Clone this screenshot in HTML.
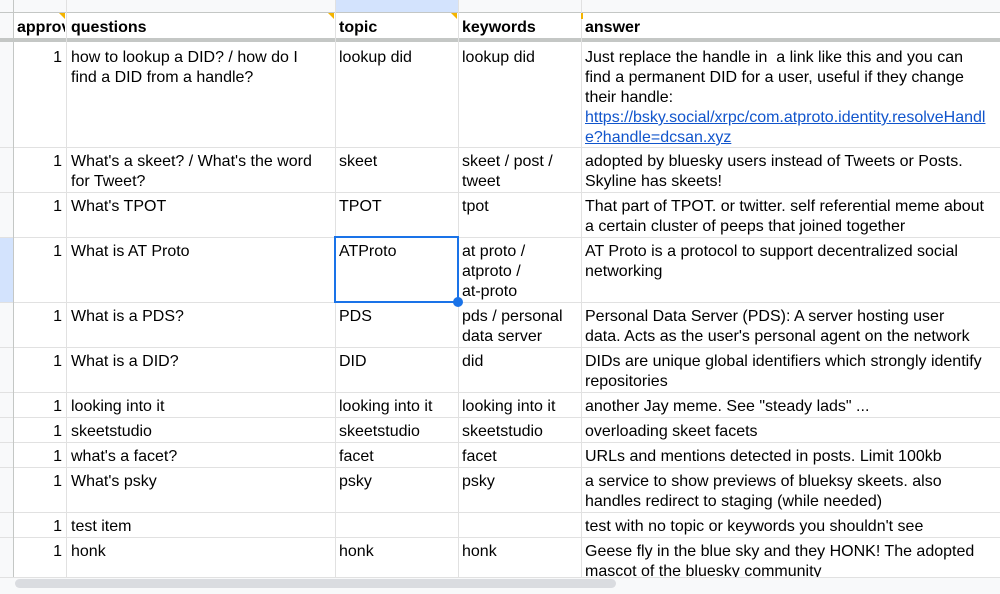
<!DOCTYPE html>
<html><head><meta charset="utf-8"><style>
body{margin:0;width:1000px;height:593px;overflow:hidden;background:#fff;font-family:"Liberation Sans",Arial,sans-serif;position:relative}
.h{position:absolute;background:#e1e1e1}
.v{position:absolute;background:#e1e1e1;width:1px}
.t{position:absolute;font-size:16px;line-height:20px;color:#000;white-space:nowrap;margin-top:2px}
.b{font-weight:bold}
.r{text-align:right}
a{color:#1155cc;text-decoration:underline}
</style></head><body>
<div style="position:absolute;left:0;top:0;width:1000px;height:12px;background:#f8f9fa"></div>
<div style="position:absolute;left:335px;top:0;width:123px;height:12px;background:#d3e3fd"></div>
<div style="position:absolute;left:0;top:0;width:13px;height:593px;background:#f8f9fa"></div>
<div style="position:absolute;left:0;top:237px;width:13px;height:65px;background:#d3e3fd"></div>
<div class="h" style="left:0;top:12px;width:1000px;height:1px;background:#c4c7c5"></div>
<div class="h" style="left:0;top:38px;width:1000px;height:4px;background:#c4c7c5"></div>
<div class="h" style="left:0;top:147px;width:1000px;height:1px"></div>
<div class="h" style="left:0;top:192px;width:1000px;height:1px"></div>
<div class="h" style="left:0;top:237px;width:1000px;height:1px"></div>
<div class="h" style="left:0;top:302px;width:1000px;height:1px"></div>
<div class="h" style="left:0;top:347px;width:1000px;height:1px"></div>
<div class="h" style="left:0;top:392px;width:1000px;height:1px"></div>
<div class="h" style="left:0;top:417px;width:1000px;height:1px"></div>
<div class="h" style="left:0;top:442px;width:1000px;height:1px"></div>
<div class="h" style="left:0;top:467px;width:1000px;height:1px"></div>
<div class="h" style="left:0;top:512px;width:1000px;height:1px"></div>
<div class="h" style="left:0;top:537px;width:1000px;height:1px"></div>
<div class="v" style="left:13px;top:0;height:577px;background:#c4c7c5"></div>
<div class="v" style="left:66px;top:0;height:577px"></div>
<div class="v" style="left:335px;top:0;height:577px"></div>
<div class="v" style="left:458px;top:0;height:577px"></div>
<div class="v" style="left:581px;top:0;height:577px"></div>
<div style="position:absolute;left:59px;top:13px;border-left:6px solid transparent;border-top:6px solid #f4b400"></div>
<div style="position:absolute;left:328px;top:13px;border-left:6px solid transparent;border-top:6px solid #f4b400"></div>
<div style="position:absolute;left:451px;top:13px;border-left:6px solid transparent;border-top:6px solid #f4b400"></div>
<div style="position:absolute;left:581px;top:13px;width:2px;height:6px;background:#f4b400"></div>
<div class="t b" style="left:17px;top:16px;width:48px;overflow:hidden">approval</div>
<div class="t b" style="left:71px;top:16px">questions</div>
<div class="t b" style="left:339px;top:16px">topic</div>
<div class="t b" style="left:462px;top:16px">keywords</div>
<div class="t b" style="left:585px;top:16px">answer</div>
<div class="t r" style="left:14px;width:48px;top:46px">1</div>
<div class="t r" style="left:14px;width:48px;top:150px">1</div>
<div class="t r" style="left:14px;width:48px;top:195px">1</div>
<div class="t r" style="left:14px;width:48px;top:240px">1</div>
<div class="t r" style="left:14px;width:48px;top:305px">1</div>
<div class="t r" style="left:14px;width:48px;top:350px">1</div>
<div class="t r" style="left:14px;width:48px;top:395px">1</div>
<div class="t r" style="left:14px;width:48px;top:420px">1</div>
<div class="t r" style="left:14px;width:48px;top:445px">1</div>
<div class="t r" style="left:14px;width:48px;top:470px">1</div>
<div class="t r" style="left:14px;width:48px;top:515px">1</div>
<div class="t r" style="left:14px;width:48px;top:540px">1</div>
<div class="t" style="left:71px;top:46px">how to lookup a DID? / how do I<br>find a DID from a handle?</div>
<div class="t" style="left:71px;top:150px">What's a skeet? / What's the word<br>for Tweet?</div>
<div class="t" style="left:71px;top:195px">What's TPOT</div>
<div class="t" style="left:71px;top:240px">What is AT Proto</div>
<div class="t" style="left:71px;top:305px">What is a PDS?</div>
<div class="t" style="left:71px;top:350px">What is a DID?</div>
<div class="t" style="left:71px;top:395px">looking into it</div>
<div class="t" style="left:71px;top:420px">skeetstudio</div>
<div class="t" style="left:71px;top:445px">what's a facet?</div>
<div class="t" style="left:71px;top:470px">What's psky</div>
<div class="t" style="left:71px;top:515px">test item</div>
<div class="t" style="left:71px;top:540px">honk</div>
<div class="t" style="left:339px;top:46px">lookup did</div>
<div class="t" style="left:339px;top:150px">skeet</div>
<div class="t" style="left:339px;top:195px">TPOT</div>
<div class="t" style="left:339px;top:240px">ATProto</div>
<div class="t" style="left:339px;top:305px">PDS</div>
<div class="t" style="left:339px;top:350px">DID</div>
<div class="t" style="left:339px;top:395px">looking into it</div>
<div class="t" style="left:339px;top:420px">skeetstudio</div>
<div class="t" style="left:339px;top:445px">facet</div>
<div class="t" style="left:339px;top:470px">psky</div>
<div class="t" style="left:339px;top:540px">honk</div>
<div class="t" style="left:462px;top:46px">lookup did</div>
<div class="t" style="left:462px;top:150px">skeet / post /<br>tweet</div>
<div class="t" style="left:462px;top:195px">tpot</div>
<div class="t" style="left:462px;top:240px">at proto /<br>atproto /<br>at-proto</div>
<div class="t" style="left:462px;top:305px">pds / personal<br>data server</div>
<div class="t" style="left:462px;top:350px">did</div>
<div class="t" style="left:462px;top:395px">looking into it</div>
<div class="t" style="left:462px;top:420px">skeetstudio</div>
<div class="t" style="left:462px;top:445px">facet</div>
<div class="t" style="left:462px;top:470px">psky</div>
<div class="t" style="left:462px;top:540px">honk</div>
<div class="t" style="left:585px;top:46px">Just replace the handle in&nbsp; a link like this and you can<br>find a permanent DID for a user, useful if they change<br>their handle:<br><a>https://bsky.social/xrpc/com.atproto.identity.resolveHandl<br>e?handle=dcsan.xyz</a></div>
<div class="t" style="left:585px;top:150px">adopted by bluesky users instead of Tweets or Posts.<br>Skyline has skeets!</div>
<div class="t" style="left:585px;top:195px">That part of TPOT. or twitter. self referential meme about<br>a certain cluster of peeps that joined together</div>
<div class="t" style="left:585px;top:240px">AT Proto is a protocol to support decentralized social<br>networking</div>
<div class="t" style="left:585px;top:305px">Personal Data Server (PDS): A server hosting user<br>data. Acts as the user's personal agent on the network</div>
<div class="t" style="left:585px;top:350px">DIDs are unique global identifiers which strongly identify<br>repositories</div>
<div class="t" style="left:585px;top:395px">another Jay meme. See "steady lads" ...</div>
<div class="t" style="left:585px;top:420px">overloading skeet facets</div>
<div class="t" style="left:585px;top:445px">URLs and mentions detected in posts. Limit 100kb</div>
<div class="t" style="left:585px;top:470px">a service to show previews of blueksy skeets. also<br>handles redirect to staging (while needed)</div>
<div class="t" style="left:585px;top:515px">test with no topic or keywords you shouldn't see</div>
<div class="t" style="left:585px;top:540px;height:35px;overflow:hidden;white-space:normal;width:410px">Geese fly in the blue sky and they HONK! The adopted<br>mascot of the bluesky community</div>
<div style="position:absolute;left:334px;top:236px;width:121px;height:63px;border:2px solid #1a73e8"></div>
<div style="position:absolute;left:453px;top:297px;width:10px;height:10px;border-radius:50%;background:#1a73e8"></div>
<div style="position:absolute;left:0;top:577px;width:1000px;height:16px;background:#f8f9fa;border-top:1px solid #e1e1e1"></div>
<div style="position:absolute;left:15px;top:579px;width:601px;height:9px;border-radius:5px;background:#dadce0"></div>
</body></html>
